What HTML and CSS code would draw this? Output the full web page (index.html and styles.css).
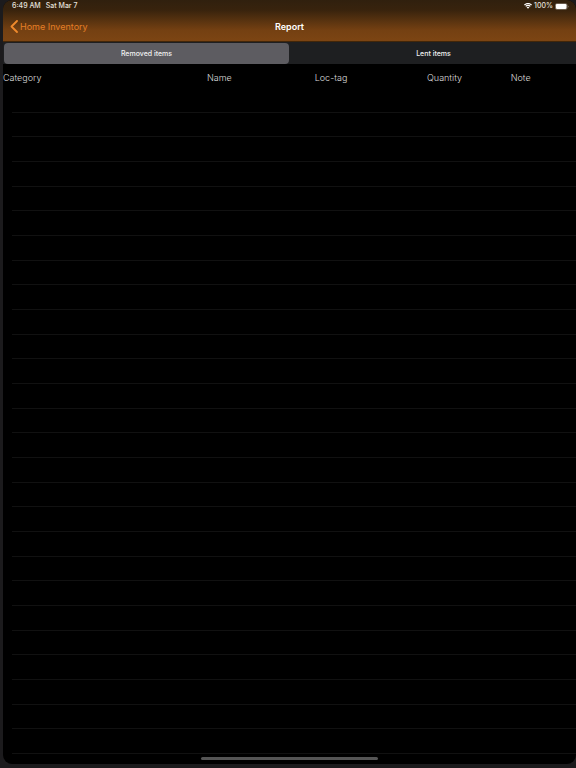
FILE: index.html
```html
<!DOCTYPE html>
<html lang="en">
<head>
    <meta charset="UTF-8">
    <meta name="viewport" content="width=device-width, initial-scale=1.0">
    <title>Report - Home Inventory</title>
    <link rel="stylesheet" href="styles.css">
</head>
<body>

    <div class="screen">
        <header class="header">
            <div class="status-bar">
                <span>6:49 AM</span>
                <span class="date">Sat Mar 7</span>
                <div class="status-icons">
                    <svg class="wifi" viewBox="0 0 16 12" aria-hidden="true">
                        <path d="M8 0C4.900 0 2.100 1.200 0 3.200L1.700 5C3.300 3.400 5.500 2.500 8 2.500S12.700 3.400 14.300 5L16 3.200C13.900 1.200 11.100 0 8 0Z"/>
                        <path d="M8 3.700C5.800 3.700 3.900 4.500 2.500 5.900L4.300 7.700C5.200 6.800 6.500 6.200 8 6.200S10.800 6.800 11.700 7.700L13.500 5.900C12.100 4.500 10.200 3.700 8 3.700Z"/>
                        <path d="M8 7.400C6.900 7.400 5.900 7.800 5.200 8.600L8 11.500L10.800 8.600C10.100 7.800 9.100 7.400 8 7.400Z"/>
                    </svg>
                    <span>100%</span>
                    <svg class="battery" viewBox="0 0 26 12" aria-hidden="true">
                        <rect x="0.500" y="0.500" width="22" height="11" rx="3" fill="none" stroke="#fff" stroke-opacity="0.500"/>
                        <rect x="1.500" y="1.500" width="20" height="9" rx="2"/>
                        <path d="M24 4C25.300 4.500 25.300 7.500 24 8Z" opacity="0.600"/>
                    </svg>
                </div>
            </div>
            <nav class="nav-bar">
                <a class="back" href="#">
                    <svg viewBox="0 0 8 13" aria-hidden="true"><path d="M7 1L1.500 6.500L7 12"/></svg>
                    Home Inventory
                </a>
                <h1 class="title">Report</h1>
            </nav>
        </header>

        <div class="segments">
            <button class="segment active" type="button" aria-pressed="true">Removed items</button>
            <button class="segment" type="button" aria-pressed="false">Lent items</button>
        </div>

        <table class="columns">
            <thead>
                <tr>
                    <th class="category" scope="col">Category</th>
                    <th class="name" scope="col">Name</th>
                    <th class="loc-tag" scope="col">Loc-tag</th>
                    <th class="quantity" scope="col">Quantity</th>
                    <th scope="col">Note</th>
                </tr>
            </thead>
        </table>

        <ul class="rows">
            <li></li>
            <li></li>
            <li></li>
            <li></li>
            <li></li>
            <li></li>
            <li></li>
            <li></li>
            <li></li>
            <li></li>
            <li></li>
            <li></li>
            <li></li>
            <li></li>
            <li></li>
            <li></li>
            <li></li>
            <li></li>
            <li></li>
            <li></li>
            <li></li>
            <li></li>
            <li></li>
            <li></li>
            <li></li>
            <li></li>
            <li></li>
        </ul>

        <div class="home-indicator"></div>
    </div>

    <script>
        const segments = document.querySelectorAll('.segment');

        segments.forEach(segment => {
            segment.addEventListener('click', () => {
                segments.forEach(s => {
                    s.classList.toggle('active', s === segment);
                    s.setAttribute('aria-pressed', s === segment);
                });
            });
        });
    </script>

</body>
</html>
```

FILE: styles.css
```css
* {
    box-sizing: border-box;
}

body {
    margin: 0;
    padding: 0 0 4px 3px;
    min-height: 100vh;
    display: flex;
    background-color: #1c1b1d;
    color: #fff;
    font-family: Inter, "Liberation Sans", sans-serif;
}

.screen {
    flex: 1;
    display: flex;
    flex-direction: column;
    background-color: #000;
    border-radius: 9px;
    overflow: hidden;
}

.header {
    background: linear-gradient(#30200e 0, #38230d 10px, #744012 30px, #7c4513 100%);
    border-bottom: 1px solid #422609;
}

/* status bar */
.status-bar {
    display: flex;
    align-items: center;
    height: 12px;
    padding: 0 7px 0 9px;
    font-size: 7px;
    font-weight: 500;
    line-height: 12px;
    color: #e6e1dc;
}

.date {
    margin-left: 5px;
}

.status-icons {
    display: flex;
    align-items: center;
    gap: 2px;
    margin-left: auto;
}

.status-icons svg {
    fill: #fff;
}

.wifi {
    width: 8px;
    height: 6px;
}

.battery {
    width: 14px;
    height: 7px;
}

/* navigation bar */
.nav-bar {
    display: grid;
    grid-template-columns: 1fr auto 1fr;
    align-items: center;
    height: 29px;
    padding: 0 7px;
}

.back {
    display: flex;
    align-items: center;
    gap: 2px;
    font-size: 9px;
    color: #e47f26;
    text-decoration: none;
}

.back svg {
    width: 8px;
    height: 13px;
    fill: none;
    stroke: #f08a2c;
    stroke-width: 1.800;
    stroke-linecap: round;
    stroke-linejoin: round;
}

.title {
    margin: 0;
    font-size: 9px;
    font-weight: 600;
}

/* segmented control */
.segments {
    display: flex;
    gap: 2px;
    height: 22px;
    padding: 1px 0 0 1px;
    background-color: #1e1f21;
}

.segment {
    flex: 1;
    padding: 0;
    border: none;
    border-radius: 4px;
    background: none;
    color: #f0f0f0;
    font-family: inherit;
    font-size: 7px;
    font-weight: 500;
    cursor: pointer;
}

.segment.active {
    background-color: #5d5c61;
}

/* column headings */
.columns {
    width: 100%;
    table-layout: fixed;
    border-collapse: collapse;
}

.columns th {
    height: 24px;
    padding: 3px 0 0;
    font-size: 9px;
    font-weight: 300;
    text-align: left;
    color: #dcdcdc;
}

.columns .category {
    width: 35.6%;
}

.columns .name {
    width: 18.8%;
}

.columns .loc-tag {
    width: 19.6%;
}

.columns .quantity {
    width: 14.6%;
}

.rows {
    flex: 1;
    display: flex;
    flex-direction: column;
    margin: 0 0 0 9px;
    padding: 0;
    list-style: none;
}

.rows li {
    flex: 1;
    border-bottom: 1px solid #111;
}

.home-indicator {
    width: 31%;
    height: 3px;
    margin: 3px auto 4px;
    border-radius: 2px;
    background-color: #555;
}
```
